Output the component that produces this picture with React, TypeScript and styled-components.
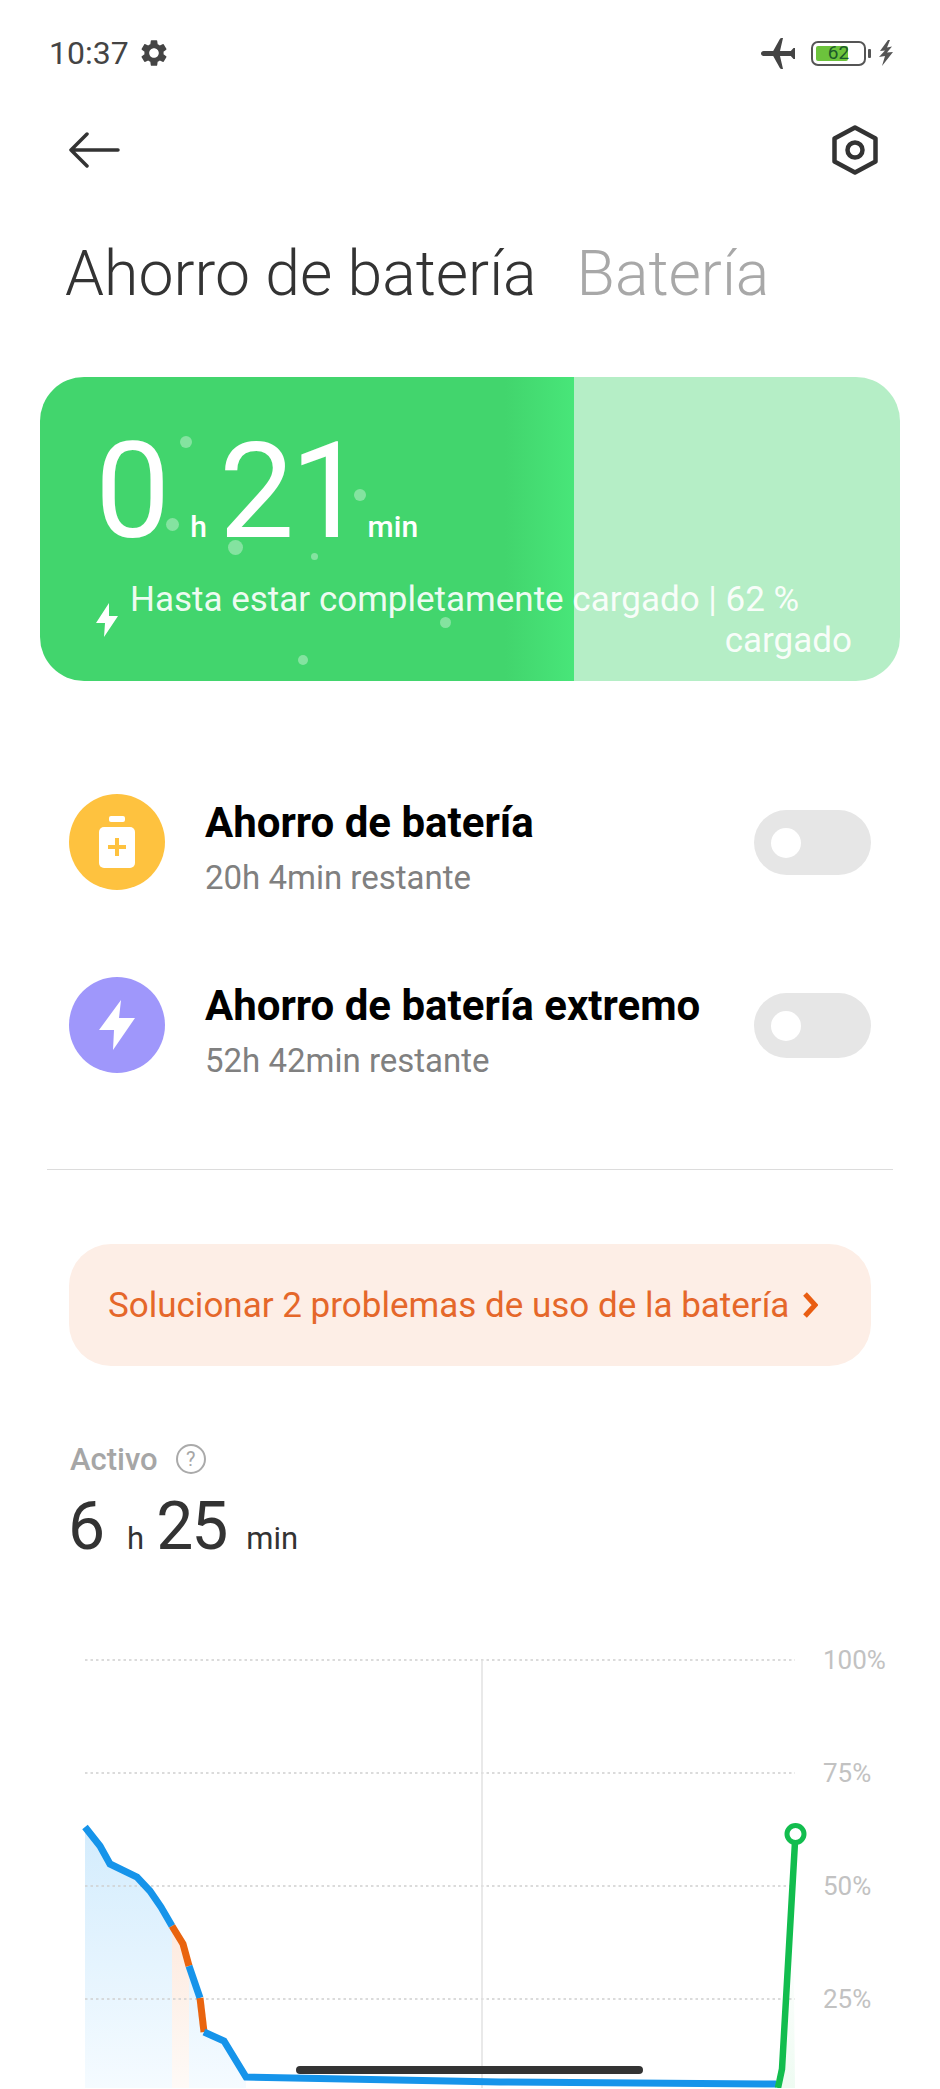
import { createGlobalStyle } from "styled-components";
import styled from "styled-components";
import { MdSettings } from "react-icons/md";

const GlobalStyle = createGlobalStyle`
    html, body {
        margin: 0;
        padding: 0;
        background: #fff;
    }
    * {
        box-sizing: border-box;
    }
`;

const Page = styled.div`
    position: relative;
    width: 940px;
    height: 2089px;
    overflow: hidden;
    background: #fff;
    font-family: Roboto, "Liberation Sans", sans-serif;
    color: #333;
`;

/* status bar */
const StatusBar = styled.div`
    display: flex;
    align-items: center;
    justify-content: space-between;
    height: 106px;
    padding: 0 46px 0 49px;
`;
const StatusLeft = styled.div`
    display: flex;
    align-items: center;
    gap: 9px;
`;
const StatusTime = styled.span`
    font-size: 32px;
    color: #444;
`;
const StatusRight = styled.div`
    display: flex;
    align-items: center;
`;
const BatteryShell = styled.div`
    position: relative;
    display: flex;
    align-items: center;
    justify-content: center;
    width: 55px;
    height: 25px;
    margin-left: 15px;
    border: 2.5px solid #555;
    border-radius: 7px;
`;
const BatteryFill = styled.div<{ $level: number }>`
    position: absolute;
    left: 3px;
    top: 3px;
    bottom: 3px;
    width: ${(props) => props.$level}%;
    background: #6cc33c;
    border-radius: 2px;
`;
const BatteryText = styled.span`
    position: relative;
    font-size: 19px;
    line-height: 20px;
    color: #1c5a2a;
`;
const BatteryNub = styled.div`
    width: 3px;
    height: 9px;
    margin: 0 7px 0 2px;
    background: #555;
    border-radius: 1px;
`;

/* toolbar + title */
const Toolbar = styled.div`
    display: flex;
    align-items: center;
    justify-content: space-between;
    height: 88px;
    padding: 0 62px 0 68px;
`;
const TitleRow = styled.div`
    display: flex;
    align-items: baseline;
    gap: 40px;
    height: 183px;
    padding: 42px 0 0 65px;
`;
const Title = styled.h1<{ $muted?: boolean }>`
    margin: 0;
    font-size: 62.5px;
    line-height: 76px;
    font-weight: 300;
    color: ${(props) => (props.$muted ? "#a8a8a8" : "#333")};
`;

/* charging card */
const Card = styled.div`
    position: relative;
    width: 860px;
    height: 304px;
    margin: 0 0 0 40px;
    padding: 56px 0 0 55px;
    border-radius: 44px;
    overflow: hidden;
    color: #fff;
    background: linear-gradient(90deg, #42d56d 0, #42d56d 465px, #48e679 534px, #b5eec6 534px, #b5eec6 100%);
`;
const Dot = styled.span<{ $x: number; $y: number; $size: number }>`
    position: absolute;
    left: ${(props) => props.$x}px;
    top: ${(props) => props.$y}px;
    width: ${(props) => props.$size}px;
    height: ${(props) => props.$size}px;
    border-radius: 50%;
    background: rgba(255, 255, 255, 0.35);
`;
const TimeRow = styled.div`
    position: relative;
    display: flex;
    align-items: baseline;
    height: 118px;
`;
const BigNumber = styled.span`
    font-size: 134px;
    line-height: 118px;
    letter-spacing: -4px;
`;
const BigUnit = styled.span<{ $gapLeft: number; $gapRight?: number }>`
    margin: 0 ${(props) => props.$gapRight || 0}px 0 ${(props) => props.$gapLeft}px;
    font-size: 30px;
    font-weight: 500;
`;
const ChargeInfo = styled.div`
    position: relative;
    display: flex;
    margin-top: 28px;
    font-size: 35px;
    line-height: 41px;
`;
const ChargeBolt = styled.svg`
    flex: none;
    width: 24px;
    height: 34px;
    margin: 24px 11px 0 0;
`;
const ChargeText = styled.div`
    width: 722px;
    white-space: nowrap;
    color: rgba(255, 255, 255, 0.92);
`;
const ChargeLineEnd = styled.div`
    text-align: right;
`;

/* saver rows */
const SaverList = styled.div`
    margin-top: 69px;
`;
const SaverRow = styled.div`
    display: flex;
    align-items: center;
    height: 183px;
    padding: 0 69px;
`;
const SaverIcon = styled.div<{ $color: string }>`
    display: flex;
    align-items: center;
    justify-content: center;
    flex: none;
    width: 96px;
    height: 96px;
    border-radius: 50%;
    background: ${(props) => props.$color};
`;
const SaverText = styled.div`
    flex: 1;
    margin: 11px 0 0 40px;
`;
const SaverTitle = styled.div`
    font-size: 42px;
    line-height: 48px;
    font-weight: 700;
    color: #000;
`;
const SaverSub = styled.div`
    margin-top: 13px;
    font-size: 33px;
    line-height: 36px;
    color: #808080;
`;
const Toggle = styled.div`
    display: flex;
    align-items: center;
    width: 117px;
    height: 65px;
    margin-top: 2px;
    padding-left: 17px;
    border-radius: 33px;
    background: #e6e6e6;
`;
const ToggleKnob = styled.div`
    width: 30px;
    height: 30px;
    border-radius: 50%;
    background: #fff;
`;

const Divider = styled.div`
    height: 1px;
    margin: 53px 47px 0;
    background: #dcdcdc;
`;

/* warning banner */
const Banner = styled.div`
    display: flex;
    align-items: center;
    gap: 13px;
    height: 122px;
    margin: 74px 69px 0;
    padding-left: 39px;
    border-radius: 42px;
    background: #fdeee6;
    font-size: 35px;
    color: #e5672a;
`;

/* active time */
const ActiveLabel = styled.div`
    display: flex;
    align-items: center;
    gap: 18px;
    height: 32px;
    margin: 77px 0 0 70px;
    font-size: 31px;
    font-weight: 500;
    color: #a6a6a6;
`;
const HelpMark = styled.span`
    display: flex;
    align-items: center;
    justify-content: center;
    width: 30px;
    height: 30px;
    border: 2px solid #aaa;
    border-radius: 50%;
    font-size: 20px;
    font-weight: 400;
`;
const ActiveTime = styled.div`
    display: flex;
    align-items: baseline;
    height: 66px;
    margin: 19px 0 0 68px;
    color: #333;
`;
const ActiveNumber = styled.span`
    font-size: 66px;
    line-height: 66px;
    letter-spacing: -2px;
`;
const ActiveUnit = styled.span<{ $gapLeft: number; $gapRight: number }>`
    margin: 0 ${(props) => props.$gapRight}px 0 ${(props) => props.$gapLeft}px;
    font-size: 31px;
`;

/* chart */
const ChartRow = styled.div`
    display: flex;
    margin: 85px 0 0 80px;
`;
const ChartSvg = styled.svg`
    flex: none;
    width: 730px;
    height: 443px;
`;
const ChartLabels = styled.div`
    display: flex;
    flex-direction: column;
    gap: 83px;
    margin-left: 13px;
`;
const ChartLabel = styled.span`
    font-size: 26px;
    line-height: 30px;
    color: #c2c2c2;
`;

const HomeBar = styled.div`
    position: absolute;
    left: 296px;
    top: 2066px;
    width: 347px;
    height: 8px;
    border-radius: 4px;
    background: #333;
`;

const dots = [
    { x: 140, y: 59, size: 12 },
    { x: 289, y: 72, size: 9 },
    { x: 314, y: 112, size: 12 },
    { x: 126, y: 141, size: 13 },
    { x: 188, y: 163, size: 15 },
    { x: 271, y: 176, size: 7 },
    { x: 400, y: 240, size: 11 },
    { x: 258, y: 278, size: 10 },
];

const gridLines = [1661, 1774, 1887, 2000];
const labels = ["100%", "75%", "50%", "25%"];

export default function App() {
    return (
        <Page>
            <GlobalStyle />
            <StatusBar>
                <StatusLeft>
                    <StatusTime>10:37</StatusTime>
                    <MdSettings size={32} color="#444" />
                </StatusLeft>
                <StatusRight>
                    <svg width="36" height="31" viewBox="0 0 36 31">
                        <path
                            d="M1 15.500c0-1.400 1.200-2.400 2.600-2.400h9.600L20 .8c.3-.5 1-.8 1.600-.8l1.400 0-3 13.100h10.800l2.700-3.100h1.500v11h-1.500l-2.700-3.100H20l3 13.100-1.400 0c-.6 0-1.300-.3-1.600-.8L13.200 18H3.600C2.200 18 1 16.900 1 15.500z"
                            fill="#444"
                        />
                    </svg>
                    <BatteryShell>
                        <BatteryFill $level={62} />
                        <BatteryText>62</BatteryText>
                    </BatteryShell>
                    <BatteryNub />
                    <svg width="16" height="26" viewBox="0 0 16 26">
                        <path d="M10 0 2 11l5-.5L1 17l6-1-3 10 11-14-6 .5 5-6-5 1 3-7.500z" fill="#555" />
                    </svg>
                </StatusRight>
            </StatusBar>

            <Toolbar>
                <svg width="52" height="36" viewBox="0 0 52 36" fill="none" stroke="#333" strokeWidth="3.5" strokeLinecap="round" strokeLinejoin="round">
                    <path d="M19 2 3 18l16 16M3 18h47" />
                </svg>
                <svg width="46" height="50" viewBox="0 0 46 50" fill="none" stroke="#333" strokeWidth="4.5" strokeLinejoin="round">
                    <path d="M23 2.500 43.500 13.500v23L23 47.500 2.500 36.500v-23z" />
                    <circle cx="23" cy="25" r="7.500" />
                </svg>
            </Toolbar>

            <TitleRow>
                <Title>Ahorro de batería</Title>
                <Title $muted>Batería</Title>
            </TitleRow>

            <Card>
                {dots.map((dot) => (
                    <Dot key={`${dot.x}-${dot.y}`} $x={dot.x} $y={dot.y} $size={dot.size} />
                ))}
                <TimeRow>
                    <BigNumber>0</BigNumber>
                    <BigUnit $gapLeft={24} $gapRight={12}>h</BigUnit>
                    <BigNumber>21</BigNumber>
                    <BigUnit $gapLeft={6}>min</BigUnit>
                </TimeRow>
                <ChargeInfo>
                    <ChargeBolt viewBox="0 0 24 34">
                        <path d="M14 0 1 20h9L9 34l14-21h-9z" fill="#fff" />
                    </ChargeBolt>
                    <ChargeText>
                        Hasta estar completamente cargado | 62 %
                        <ChargeLineEnd>cargado</ChargeLineEnd>
                    </ChargeText>
                </ChargeInfo>
            </Card>

            <SaverList>
                <SaverRow>
                    <SaverIcon $color="#fec23f">
                        <svg width="38" height="52" viewBox="0 0 38 52">
                            <rect x="11" y="0" width="16" height="6" rx="2" fill="#fff" />
                            <rect x="1" y="11" width="36" height="41" rx="5" fill="#fff" />
                            <path d="M19 22v18M10 31h18" stroke="#fec23f" strokeWidth="4" />
                        </svg>
                    </SaverIcon>
                    <SaverText>
                        <SaverTitle>Ahorro de batería</SaverTitle>
                        <SaverSub>20h 4min restante</SaverSub>
                    </SaverText>
                    <Toggle>
                        <ToggleKnob />
                    </Toggle>
                </SaverRow>
                <SaverRow>
                    <SaverIcon $color="#9f97fb">
                        <svg width="38" height="52" viewBox="0 0 38 52">
                            <path d="M23 1 1 31h15l-1 20 22-32H21z" fill="#fff" />
                        </svg>
                    </SaverIcon>
                    <SaverText>
                        <SaverTitle>Ahorro de batería extremo</SaverTitle>
                        <SaverSub>52h 42min restante</SaverSub>
                    </SaverText>
                    <Toggle>
                        <ToggleKnob />
                    </Toggle>
                </SaverRow>
            </SaverList>

            <Divider />

            <Banner>
                Solucionar 2 problemas de uso de la batería
                <svg width="16" height="30" viewBox="0 0 16 30" fill="none" stroke="#e95d12" strokeWidth="5">
                    <path d="m3 4 10 11L3 26" />
                </svg>
            </Banner>

            <ActiveLabel>
                Activo
                <HelpMark>?</HelpMark>
            </ActiveLabel>
            <ActiveTime>
                <ActiveNumber>6</ActiveNumber>
                <ActiveUnit $gapLeft={24} $gapRight={12}>h</ActiveUnit>
                <ActiveNumber>25</ActiveNumber>
                <ActiveUnit $gapLeft={20} $gapRight={0}>min</ActiveUnit>
            </ActiveTime>

            <ChartRow>
                <ChartSvg viewBox="80 1646 730 443" fill="none">
                    <defs>
                        <linearGradient id="blueFill" gradientUnits="userSpaceOnUse" x1="0" y1="1828" x2="0" y2="2089">
                            <stop offset="0" stopColor="#d3ecfd" />
                            <stop offset="1" stopColor="#f5fbff" />
                        </linearGradient>
                        <linearGradient id="orangeFill" gradientUnits="userSpaceOnUse" x1="0" y1="1930" x2="0" y2="2089">
                            <stop offset="0" stopColor="#fdeadf" />
                            <stop offset="1" stopColor="#fefaf7" />
                        </linearGradient>
                        <linearGradient id="greenFill" gradientUnits="userSpaceOnUse" x1="0" y1="1940" x2="0" y2="2089">
                            <stop offset="0" stopColor="#ffffff" />
                            <stop offset="1" stopColor="#eefbf2" />
                        </linearGradient>
                    </defs>
                    <path d="M85 1828 100 1847 110 1865 137 1878 150 1892 161 1908 172 1927V2089H85z" fill="url(#blueFill)" />
                    <path d="M172 1927 183 1945 189 1967V2089H172z" fill="url(#orangeFill)" />
                    <path d="M189 1967 200 1999 204 2033 224 2042 246 2078V2089H189z" fill="url(#blueFill)" />
                    <path d="M782 2070 793 1900 795 2089H778z" fill="url(#greenFill)" />
                    {gridLines.map((y) => (
                        <line key={y} x1="85" x2="795" y1={y} y2={y} stroke="#cfcfcf" strokeWidth="1.5" strokeDasharray="2.5 3" />
                    ))}
                    <line x1="482" x2="482" y1="1661" y2="2089" stroke="#e2e2e2" strokeWidth="1.5" />
                    <path d="M85 1828 100 1847 110 1865 137 1878 150 1892 161 1908 172 1927" stroke="#1694ea" strokeWidth="7" />
                    <path d="M172 1927 183 1945 189 1967" stroke="#e9640f" strokeWidth="7" />
                    <path d="M189 1967 200 1999" stroke="#1694ea" strokeWidth="7" />
                    <path d="M200 1999 204 2033" stroke="#e9640f" strokeWidth="7" />
                    <path d="M204 2033 224 2042 246 2078 500 2083 776 2085" stroke="#1694ea" strokeWidth="7" />
                    <path d="M778 2089 782 2070 795 1843" stroke="#12bd4e" strokeWidth="6.500" />
                    <circle cx="795.500" cy="1835" r="8.500" stroke="#12bd4e" strokeWidth="5" fill="#fff" />
                </ChartSvg>
                <ChartLabels>
                    {labels.map((label) => (
                        <ChartLabel key={label}>{label}</ChartLabel>
                    ))}
                </ChartLabels>
            </ChartRow>

            <HomeBar />
        </Page>
    );
}
